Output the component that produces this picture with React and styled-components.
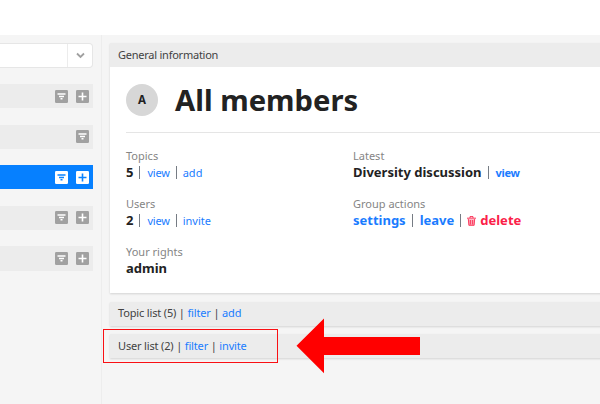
import React from "react";
import styled, { createGlobalStyle } from "styled-components";

const Global = createGlobalStyle`
  * { box-sizing: border-box; }
  body {
    margin: 0;
    background: #f5f5f5;
    font-family: "Noto Sans", "Open Sans", sans-serif;
    font-size: 11px;
    color: #424242;
    overflow: hidden;
  }
`;

const Page = styled.div`
  position: relative;
  display: flex;
  flex-direction: column;
  width: 600px;
  height: 404px;
  overflow: hidden;
`;

const TopBar = styled.header`
  flex: none;
  height: 35px;
  background: #fff;
`;

const Columns = styled.div`
  flex: 1;
  display: flex;
`;

const Sidebar = styled.aside`
  flex: none;
  width: 102px;
  padding-top: 8px;
  border-right: 1px solid #ededed;
`;

const Select = styled.div`
  display: flex;
  justify-content: flex-end;
  width: 93px;
  height: 25px;
  margin-bottom: 16px;
  background: #fff;
  border: 1px solid #e6e6e6;
  border-left: 0;
  border-radius: 0 4px 4px 0;
`;

const SelectArrow = styled.div`
  display: flex;
  align-items: center;
  justify-content: center;
  width: 25px;
  border-left: 1px solid #ececec;
`;

const GroupList = styled.div`
  display: flex;
  flex-direction: column;
  gap: 16.3px;
`;

const GroupRow = styled.div`
  display: flex;
  align-items: center;
  justify-content: flex-end;
  gap: 8px;
  width: 93px;
  height: 24.3px;
  padding-right: 4px;
  color: ${(p) => (p.$active ? "#fff" : "#a1a1a1")};
  --mark: ${(p) => (p.$active ? "#0a84ff" : "#fff")};
  background: ${(p) => (p.$active ? "#0680ff" : "#ececec")};
`;

const Icon = styled.svg`
  display: block;
  flex: none;
`;

const Main = styled.main`
  flex: 1;
  display: flex;
  flex-direction: column;
  padding: 8px 0 0 8px;
`;

const Card = styled.section`
  height: 250px;
  width: 510px;
  margin-bottom: 9px;
  background: #fff;
  box-shadow: 0 1px 2px rgba(0, 0, 0, 0.14);
`;

const CardHeader = styled.div`
  height: 24px;
  padding-left: 8px;
  line-height: 24px;
  background: #ececec;
  letter-spacing: -0.24px;
`;

const ListBar = styled(CardHeader)`
  flex: none;
  width: 510px;
  margin-bottom: 8px;
  line-height: ${(p) => p.$line}px;
  white-space: pre;
  letter-spacing: -0.16px;
  box-shadow: 0 1px 2px rgba(0, 0, 0, 0.14);
`;

const CardBody = styled.div`
  padding: 0 0 0 16px;
`;

const TitleRow = styled.div`
  display: flex;
  align-items: center;
  gap: 17px;
  height: 66px;
  border-bottom: 1px solid #e5e5e5;
`;

const Avatar = styled.div`
  width: 32px;
  height: 32px;
  border-radius: 50%;
  background: #d7d7d7;
  color: #222;
  font-size: 11.5px;
  font-weight: 700;
  line-height: 32px;
  text-align: center;
`;

const Title = styled.h1`
  margin: 0;
  color: #222;
  font-size: 29.2px;
  font-weight: 700;
  line-height: 40px;
`;

const InfoGrid = styled.div`
  display: grid;
  grid-template-columns: 227px 1fr;
  grid-auto-rows: 48px;
  padding-top: 15px;
`;

const Label = styled.div`
  height: 16px;
  line-height: 16px;
  color: #858585;
`;

const Value = styled.div`
  display: flex;
  align-items: center;
  height: 17px;
  line-height: 17px;
  color: #222;
  font-size: 13px;
  font-weight: 700;
  white-space: nowrap;
`;

const Divider = styled.span`
  width: 1px;
  height: 13px;
  margin: 0 ${(p) => p.$after ?? 6}px 0 6px;
  background: #767c84;
`;

const Link = styled.a`
  color: ${(p) => (p.$danger ? "#fb2048" : "#1a7cff")};
  font-size: ${(p) => (p.$large ? 13 : 11)}px;
  font-weight: ${(p) => (p.$bold ? 700 : 400)};
  letter-spacing: ${(p) => p.$tracking ?? "inherit"};
`;

const TrashIcon = styled(Icon)`
  margin-right: 4px;
`;

const Highlight = styled.div`
  position: absolute;
  left: 103px;
  top: 329px;
  width: 175px;
  height: 34px;
  border: 1px solid #f91014;
`;

const Arrow = styled.svg`
  position: absolute;
  left: 296px;
  top: 318px;
`;

const FilterButton = () => (
  <Icon width="13" height="13" viewBox="0 0 13 13">
    <rect width="13" height="13" rx="1.2" fill="currentColor" />
    <path d="M2.5 4H10.5M4 6.5H9M5.5 8.8H7.5" stroke="var(--mark)" strokeWidth="1.5" />
  </Icon>
);

const AddButton = () => (
  <Icon width="13" height="13" viewBox="0 0 13 13">
    <rect width="13" height="13" rx="1.2" fill="currentColor" />
    <path d="M6.5 2.5V10.5M2.5 6.5H10.5" stroke="var(--mark)" strokeWidth="1.6" />
  </Icon>
);

const Trash = () => (
  <TrashIcon width="9" height="10" viewBox="0 0 9 10">
    <path d="M3 2V.6H6V2M0 2.2H9" fill="none" stroke="#fb2048" strokeWidth=".9" />
    <path d="M1 3.2H8L7.4 9.6H1.6Z" fill="#fb2048" fillOpacity=".4" />
    <path d="M1.3 3L1.9 9.3H7.1L7.7 3M3.4 4V8.5M5.6 4V8.5" fill="none" stroke="#fb2048" strokeWidth=".8" />
  </TrashIcon>
);

const groups = [
  { add: true },
  { add: false },
  { add: true, active: true },
  { add: true },
  { add: true },
];

const Info = ({ label, children }) => (
  <div>
    <Label>{label}</Label>
    <Value>{children}</Value>
  </div>
);

export default function App() {
  return (
    <Page>
      <Global />
      <TopBar />
      <Columns>
        <Sidebar>
          <Select>
            <SelectArrow>
              <Icon width="9" height="7" viewBox="0 0 9 7">
                <path d="M1 1.5L4.5 5L8 1.5" fill="none" stroke="#a0a0a0" strokeWidth="1.8" />
              </Icon>
            </SelectArrow>
          </Select>
          <GroupList>
            {groups.map((g, i) => (
              <GroupRow key={i} $active={g.active}>
                <FilterButton />
                {g.add && <AddButton />}
              </GroupRow>
            ))}
          </GroupList>
        </Sidebar>
        <Main>
          <Card>
            <CardHeader>General information</CardHeader>
            <CardBody>
              <TitleRow>
                <Avatar>A</Avatar>
                <Title>All members</Title>
              </TitleRow>
              <InfoGrid>
                <Info label="Topics">
                  5<Divider $after={7} /><Link $tracking="-0.2px">view</Link><Divider /><Link>add</Link>
                </Info>
                <Info label="Latest">
                  Diversity discussion<Divider $after={7} /><Link $bold $tracking="-0.3px">view</Link>
                </Info>
                <Info label="Users">
                  2<Divider $after={7} /><Link $tracking="-0.2px">view</Link><Divider /><Link>invite</Link>
                </Info>
                <Info label="Group actions">
                  <Link $large $bold>settings</Link><Divider $after={7} />
                  <Link $large $bold>leave</Link><Divider $after={6} />
                  <Trash />
                  <Link $large $bold $danger>delete</Link>
                </Info>
                <Info label="Your rights">admin</Info>
              </InfoGrid>
            </CardBody>
          </Card>
          <ListBar $line={22}>Topic list (5) | <Link>filter</Link> | <Link>add</Link></ListBar>
          <ListBar $line={24}>User list (2) | <Link>filter</Link> | <Link>invite</Link></ListBar>
        </Main>
      </Columns>
      <Highlight />
      <Arrow width="124" height="56" viewBox="0 0 124 56">
        <path d="M.5 27.7L28 .5V19H124V37H28V55.3Z" fill="#f00" />
      </Arrow>
    </Page>
  );
}
